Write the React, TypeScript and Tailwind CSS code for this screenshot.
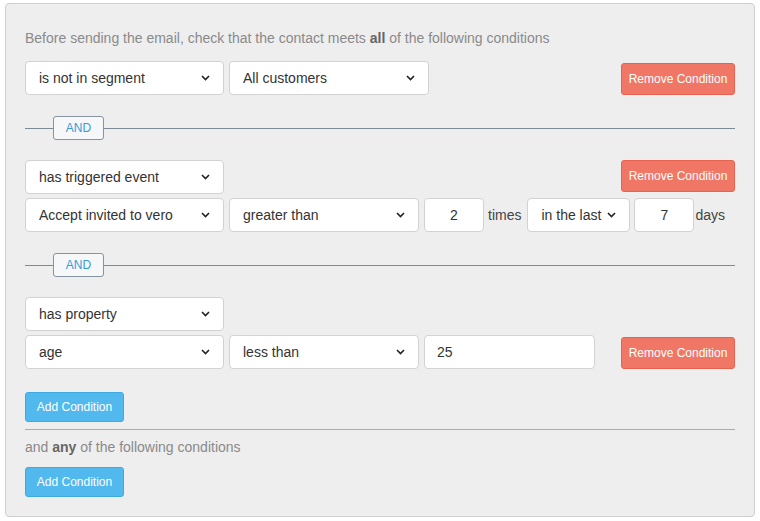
import React from "react";

const font = { fontFamily: '"Liberation Sans", Arial, sans-serif' };

function Chevron() {
  return (
    <svg width="9" height="6" viewBox="0 0 9 6" aria-hidden="true" className="shrink-0">
      <path d="M1 1l3.5 3.5L8 1" fill="none" stroke="#222" strokeWidth="1.6" />
    </svg>
  );
}

function Select({ label, w }: { label: string; w: string }) {
  return (
    <div
      role="button"
      className={`${w} h-[34px] flex items-center pl-[13px] pr-[13px] bg-white border border-[#d2d2d2] rounded-[4px] text-[14px] text-[#333]`}
    >
      <span className="flex-1 truncate">{label}</span>
      <Chevron />
    </div>
  );
}

function Field({ value, w, center }: { value: string; w: string; center?: boolean }) {
  return (
    <input
      readOnly
      value={value}
      className={`${w} h-[34px] px-[12px] bg-white border border-[#d2d2d2] rounded-[4px] text-[14px] text-[#333] outline-none ${center ? "text-center" : ""}`}
    />
  );
}

function RemoveButton() {
  return (
    <button className="w-[114px] h-[32px] bg-[#f07766] border border-[#e8624f] rounded-[3px] text-white text-[12px]">
      Remove Condition
    </button>
  );
}

function AddButton() {
  return (
    <button className="w-[99px] h-[30px] bg-[#51b9ee] border border-[#3eaae2] rounded-[3px] text-white text-[12px]">
      Add Condition
    </button>
  );
}

function AndDivider() {
  return (
    <div className="flex items-center h-[24px]">
      <div className="w-[28px] h-px bg-[#7c8a98]" />
      <div className="w-[51px] h-[24px] flex items-center justify-center bg-[#f5f7f8] border border-[#8494a3] rounded-[3px] text-[12px] text-[#3a9ad9]">
        AND
      </div>
      <div className="flex-1 h-px bg-[#7c8a98]" />
    </div>
  );
}

export default function App() {
  return (
    <div className="pl-[5px] pt-[3px] bg-white min-h-[521px]" style={font}>
      <div className="w-[750px] h-[514px] bg-[#eeeeee] border border-[#cfcfcf] rounded-[4px] px-[19px] pt-[24px]">
        <p className="h-[20px] leading-[20px] text-[14px] text-[#8a8a8a]">
          Before sending the email, check that the contact meets <b className="text-[#666]">all</b> of the following conditions
        </p>

        {/* Condition 1 */}
        <div className="mt-[13px] flex items-center gap-[5px]">
          <Select label="is not in segment" w="w-[199px]" />
          <Select label="All customers" w="w-[200px]" />
          <div className="ml-auto mt-[2px]">
            <RemoveButton />
          </div>
        </div>

        <div className="mt-[21px]">
          <AndDivider />
        </div>

        {/* Condition 2 */}
        <div className="mt-[20px] flex items-center">
          <Select label="has triggered event" w="w-[199px]" />
          <div className="ml-auto mb-[2px]">
            <RemoveButton />
          </div>
        </div>
        <div className="mt-[4px] flex items-center gap-[5px]">
          <Select label="Accept invited to vero" w="w-[199px]" />
          <Select label="greater than" w="w-[190px]" />
          <Field value="2" w="w-[60px]" center />
          <span className="text-[14px] text-[#444] -ml-[1px] mr-[1px]">times</span>
          <Select label="in the last" w="w-[103px]" />
          <div className="-ml-[1px]">
            <Field value="7" w="w-[60px]" center />
          </div>
          <span className="text-[14px] text-[#444] -ml-[4px]">days</span>
        </div>

        <div className="mt-[21px]">
          <AndDivider />
        </div>

        {/* Condition 3 */}
        <div className="mt-[20px]">
          <Select label="has property" w="w-[199px]" />
        </div>
        <div className="mt-[4px] flex items-center gap-[5px]">
          <Select label="age" w="w-[199px]" />
          <Select label="less than" w="w-[190px]" />
          <Field value="25" w="w-[171px]" />
          <div className="ml-auto mt-[2px]">
            <RemoveButton />
          </div>
        </div>

        <div className="mt-[23px]">
          <AddButton />
        </div>

        <div className="mt-[7px] h-px bg-[#aaaaaa]" />

        <p className="mt-[7px] h-[20px] leading-[20px] text-[14px] text-[#8a8a8a]">
          and <b className="text-[#666]">any</b> of the following conditions
        </p>

        <div className="mt-[10px]">
          <AddButton />
        </div>
      </div>
    </div>
  );
}
